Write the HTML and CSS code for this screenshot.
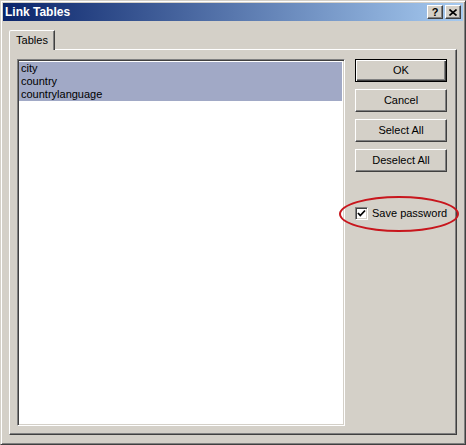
FILE: index.html
```html
<!DOCTYPE html>
<html>
<head>
<meta charset="utf-8">
<link rel="stylesheet" href="styles.css">
</head>
<body>
<div class="window">
  <div class="titlebar">
    <span class="title">Link Tables</span>
    <div class="caption-btns">
      <span class="cbtn help">?</span>
      <span class="cbtn close"><svg width="8" height="7" viewBox="0 0 8 7"><path d="M0.5 0.5 L7.5 6.5 M7.5 0.5 L0.5 6.5" stroke="#000" stroke-width="1.6" fill="none"/></svg></span>
    </div>
  </div>
  <div class="client">
    <div class="tabs"><div class="tab">Tables</div></div>
    <div class="panel">
      <div class="listbox">
        <div class="item sel">city</div>
        <div class="item sel">country</div>
        <div class="item sel">countrylanguage</div>
      </div>
      <div class="side">
        <div class="btn default"><span>OK</span></div>
        <div class="btn"><span>Cancel</span></div>
        <div class="btn"><span>Select All</span></div>
        <div class="btn"><span>Deselect All</span></div>
        <label class="check">
          <span class="box"><svg width="9" height="9" viewBox="0 0 9 9"><path d="M1 4 L3.3 6.5 L8 1.5" stroke="#000" stroke-width="1.8" fill="none"/></svg></span>
          <span class="check-label">Save password</span>
        </label>
      </div>
    </div>
  </div>
  <div class="highlight"></div>
</div>
</body>
</html>
```
FILE: styles.css
```css
html, body {
  margin: 0;
  padding: 0;
  background: #d4d0c8;
}
body {
  font-family: "Liberation Sans", Arial, sans-serif;
  font-size: 11px;
  color: #000;
}
.window {
  position: relative;
  width: 466px;
  height: 445px;
  box-sizing: border-box;
  background: #d4d0c8;
  border: 1px solid;
  border-color: #d4d0c8 #404040 #404040 #d4d0c8;
  box-shadow: inset 1px 1px #fff, inset -1px -1px #808080;
  padding: 2px;
  display: flex;
  flex-direction: column;
}
.titlebar {
  height: 18px;
  background: linear-gradient(to right, #0a246a, #a6caf0);
  display: flex;
  align-items: center;
  justify-content: space-between;
  padding: 0 2px 0 2px;
}
.title {
  color: #fff;
  font-weight: bold;
  font-size: 12px;
  line-height: 14px;
}
.caption-btns {
  display: flex;
  gap: 2px;
}
.cbtn {
  width: 16px;
  height: 14px;
  box-sizing: border-box;
  background: #d4d0c8;
  border: 1px solid;
  border-color: #fff #404040 #404040 #fff;
  box-shadow: inset -1px -1px #808080;
  display: flex;
  align-items: center;
  justify-content: center;
  font-weight: bold;
  font-size: 11px;
  line-height: 11px;
}
.client {
  padding: 9px 6px 0 6px;
  display: flex;
  flex-direction: column;
}
.tabs {
  display: flex;
  position: relative;
  z-index: 1;
  margin-bottom: -1px;
}
.tab {
  width: 46px;
  height: 20px;
  box-sizing: border-box;
  background: #d4d0c8;
  border: 1px solid;
  border-bottom: none;
  border-color: #fff #404040 transparent #fff;
  box-shadow: inset -1px 0 #808080;
  border-top-left-radius: 2px;
  padding-top: 3px;
  line-height: 13px;
  text-align: center;
}
.panel {
  height: 386px;
  box-sizing: border-box;
  border: 1px solid;
  border-color: #fff #404040 #404040 #fff;
  box-shadow: inset -1px -1px #808080;
  padding: 9px 9px 0 7px;
  display: flex;
  gap: 10px;
}
.listbox {
  width: 328px;
  height: 367px;
  box-sizing: border-box;
  background: #fff;
  border: 1px solid;
  border-color: #808080 #fff #fff #808080;
  box-shadow: inset 1px 1px #404040, inset -1px -1px #d4d0c8;
  padding: 2px 2px 0 1px;
}
.item {
  height: 13px;
  line-height: 13px;
  padding-left: 2px;
}
.item.sel {
  background: #a1a9c6;
}
.side {
  width: 92px;
  display: flex;
  flex-direction: column;
  gap: 7px;
}
.btn {
  height: 23px;
  box-sizing: border-box;
  background: #d4d0c8;
  border: 1px solid;
  border-color: #fff #404040 #404040 #fff;
  box-shadow: inset -1px -1px #808080;
  display: flex;
  align-items: center;
  justify-content: center;
  line-height: 13px;
}
.btn.default {
  border: 1px solid #000;
  box-shadow: inset 1px 1px #fff, inset -1px -1px #404040, inset -2px -2px #808080;
}
.check {
  margin-top: 28px;
  display: flex;
  align-items: center;
  gap: 4px;
  height: 13px;
  white-space: nowrap;
}
.box {
  flex: none;
  width: 13px;
  height: 13px;
  box-sizing: border-box;
  background: #fff;
  border: 1px solid;
  border-color: #808080 #fff #fff #808080;
  box-shadow: inset 1px 1px #404040, inset -1px -1px #d4d0c8;
  display: flex;
  align-items: center;
  justify-content: center;
}
.check-label {
  line-height: 13px;
}
.highlight {
  position: absolute;
  left: 338px;
  top: 195px;
  width: 120px;
  height: 36px;
  box-sizing: border-box;
  border: 2px solid #c8161d;
  border-radius: 50%;
  pointer-events: none;
}
```
